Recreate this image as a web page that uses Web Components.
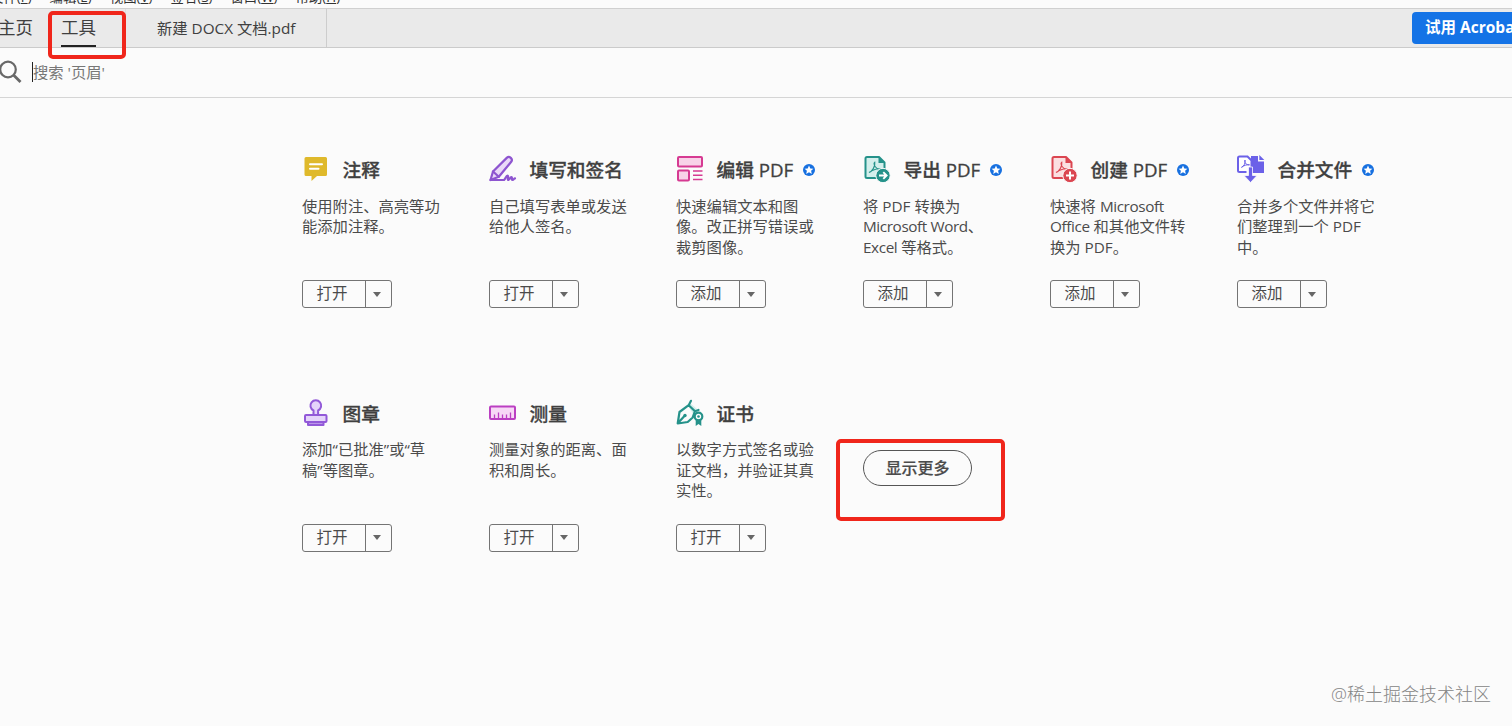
<!DOCTYPE html>
<html lang="zh-CN">
<head>
<meta charset="UTF-8">
<title>工具</title>
<style>
  body {
    margin: 0;
    height: 726px;
    overflow: hidden;
    background: #fbfbfb;
    color: #4b4b4b;
    font-family: "Open Sans", "Noto Sans CJK SC", sans-serif;
  }
</style>
</head>
<body>
<tools-app></tools-app>

<script>
  // 28x28 icon drawings, keyed by the name passed to <tool-icon>
  const ICONS = {
    comment: `<path d="M4 2h19.500q1.500 0 1.500 1.500v16q0 1.500-1.500 1.500H15l-5.500 5v-5H4q-1.500 0-1.500-1.500v-16Q2.500 2 4 2z" fill="#dfb92b"/>
      <path d="M8 9.300h12M8 13.800h8.500" stroke="#fff" stroke-width="2" stroke-linecap="round"/>`,
    sign: `<g fill="none" stroke="#8e55d0" stroke-width="2.200" stroke-linecap="round" stroke-linejoin="round">
      <path d="M1.500 25l2.500-8.500L18 2.600q1.700-1.500 3.800.3 2 1.900.4 3.900L9.800 21.800z" fill="#ead9f8"/>
      <path d="M4 16.500l5.800 5.300M1.500 25h13.500c1.500-1 2-4.500 3.500-4.500s-.5 4.500.8 4.500 1.700-3 3-3-.2 3 1.200 3 1.300-1.600 2.500-1.600"/></g>`,
    edit: `<g fill="#f8d2e8" stroke="#d63a92" stroke-width="2"><rect x="2" y="2" width="24" height="9.500" rx="1"/><rect x="2" y="15.500" width="11" height="10" rx="1"/></g>
      <path d="M17 16h9.500M17 20.300h9.500M17 24.600h9.500" stroke="#d63a92" stroke-width="1.500"/>`,
    export: `<path d="M4 2h12l5.500 5.500V23H4q-1.500 0-1.500-1.500v-18Q2.500 2 4 2z" fill="#d3efec" stroke="#25928a" stroke-width="2" stroke-linejoin="round"/>
      <path d="M15.500 2v6h6z" fill="#25928a"/>
      <path d="M6 17.500c3-1 6.500-6 5.800-10.200-2 1.500 1.300 8 6.200 6.700-3-.9-8 .8-12 3.500z" fill="none" stroke="#25928a" stroke-width="1.100"/>
      <circle cx="20" cy="20.500" r="7.200" fill="#25928a" stroke="#fbfbfb"/>
      <path d="M16 20.500h7.500m-3.200-3.300l3.300 3.300-3.300 3.300" fill="none" stroke="#fff" stroke-width="1.900"/>`,
    create: `<path d="M4 2h12l5.500 5.500V23H4q-1.500 0-1.500-1.500v-18Q2.500 2 4 2z" fill="#fbdfe1" stroke="#db4651" stroke-width="2" stroke-linejoin="round"/>
      <path d="M15.500 2v6h6z" fill="#db4651"/>
      <path d="M6 17.500c3-1 6.500-6 5.800-10.200-2 1.500 1.300 8 6.200 6.700-3-.9-8 .8-12 3.500z" fill="none" stroke="#db4651" stroke-width="1.100"/>
      <circle cx="20" cy="20.500" r="7.200" fill="#db4651" stroke="#fbfbfb"/>
      <path d="M16 20.500h8m-4-4v8" fill="none" stroke="#fff" stroke-width="2"/>`,
    combine: `<path d="M14 1h7v5.500h6V18h-13z" fill="#6b61e8"/><path d="M22.300 0v5h5z" fill="#6b61e8"/>
      <path d="M9.500 17H2.500q-1.500 0-1.500-1.500V3q0-1.500 1.500-1.500h8l4 4V12" fill="#fff" stroke="#6b61e8" stroke-width="2"/>
      <path d="M4.500 12.300c2.500-1 4-4 3.600-7.300-1.400 1.500 1 5.600 4.400 4.800-2-.5-5.500.5-8 2.500z" fill="none" stroke="#6b61e8"/>
      <path d="M11.500 12h4v8.500h4.500L13.500 27.500 7 20.500h4.500z" fill="#6b61e8" stroke="#fbfbfb" stroke-width=".8"/>`,
    stamp: `<g fill="#e5d4fa" stroke="#9259d8" stroke-width="2" stroke-linejoin="round"><path d="M11.500 16v-4.500a5.400 5.400 0 1 1 4.600 0V16z"/>
      <rect x="3" y="16" width="21.500" height="7" rx="1"/><path d="M6 23.500h15.500v2.500H6z"/></g>`,
    measure: `<rect x="1" y="7.500" width="25" height="12.500" rx="1" fill="#f7d8f6" stroke="#bb3fc2" stroke-width="2"/>
      <path d="M5.500 19.500v-4M9.500 19.500v-6M13.500 19.500v-4M17.500 19.500v-4M21.500 19.500v-6" stroke="#bb3fc2" stroke-width="1.300"/>`,
    certificate: `<path d="M14 4l7 6-4 5-4-7z" fill="#d3efec"/>
      <g fill="none" stroke="#25928a" stroke-width="2.200" stroke-linecap="round" stroke-linejoin="round">
      <path d="M15 1.800l-2.300 4.400 6.300 6 3.500-1.200M12.700 6.200L3.500 13 1.700 24.500l10-1.500 5-4.500L19 12.200M2 24l6-6.500"/>
      <circle cx="22.500" cy="17.500" r="3.800" fill="#fbfbfb"/></g><circle cx="9" cy="16.500" r="1.700" fill="#25928a"/><circle cx="22.500" cy="17.500" r="1.300" fill="#25928a"/>
      <path d="M19.700 20.500h5.600V27l-2.800-2-2.800 2z" fill="#25928a"/>`
  };

  class ToolIcon extends HTMLElement {
    connectedCallback() {
      this.attachShadow({ mode: 'open' }).innerHTML = `
        <style>
          :host { display: block; width: 28px; height: 28px; flex: none; margin-bottom: 2px; }
          svg { display: block; }
        </style>
        <svg width="28" height="28" viewBox="0 0 28 28">${ICONS[this.getAttribute('name')]}</svg>
      `;
    }
  }

  class SplitButton extends HTMLElement {
    constructor() {
      super();
      this.attachShadow({ mode: 'open' }).innerHTML = `
        <style>
          :host {
            display: flex;
            box-sizing: border-box;
            width: 90px;
            height: 28px;
            border: 1px solid #747474;
            border-radius: 3px;
            font-size: 15.5px;
            line-height: 25px;
          }
          .label { width: 63px; box-sizing: border-box; padding-right: 4px; text-align: center; border-right: 1px solid #747474; }
          .arrow { flex: 1; display: grid; place-items: center; padding-right: 4px; }
        </style>
        <div class="label"><slot></slot></div>
        <div class="arrow"><svg width="8" height="5"><path d="M0 0h8L4 5z" fill="#666"/></svg></div>
      `;
    }
  }

  class ToolCard extends HTMLElement {
    connectedCallback() {
      const star = `<svg class="star" width="12" height="12" viewBox="0 0 12 12"><circle cx="6" cy="6" r="6" fill="#1770e0"/>
        <path d="M6 1.500l1.300 2.900 3.100.3-2.300 2.100.7 3.100L6 8.300 3.200 9.900l.7-3.100-2.300-2.100 3.100-.3z" fill="#fff"/></svg>`;
      this.attachShadow({ mode: 'open' }).innerHTML = `
        <style>
          :host { display: block; }
          .head { display: flex; align-items: center; height: 30px; }
          .title {
            margin-left: 12.500px;
            font-size: 18.7px;
            line-height: 30px;
            font-weight: 500;
            color: #404040;
            white-space: nowrap;
            -webkit-text-stroke: 0.3px #404040;
          }
          .star { margin-left: 9.500px; }
          .desc { height: 84.500px; margin-top: 10.500px; font-size: 15.3px; line-height: 20.7px; white-space: nowrap; }
          ::slotted(.tight) { letter-spacing: -0.4px; }
        </style>
        <div class="head">
          <tool-icon name="${this.getAttribute('icon')}"></tool-icon>
          <div class="title"><slot name="title"></slot></div>
          ${this.hasAttribute('premium') ? star : ''}
        </div>
        <div class="desc"><slot></slot></div>
        <split-button>${this.getAttribute('action')}</split-button>
      `;
    }
  }

  class MenuBar extends HTMLElement {
    constructor() {
      super();
      this.attachShadow({ mode: 'open' }).innerHTML = `
        <style>
          :host { display: flex; align-items: flex-end; height: 8px; overflow: hidden; font-size: 13.4px; line-height: 18px; color: #333; }
          nav { display: flex; gap: 18px; margin-left: -10px; margin-bottom: 2px; white-space: nowrap; }
        </style>
        <nav>
          <span>文件(<u>F</u>)</span><span>编辑(<u>E</u>)</span><span>视图(<u>V</u>)</span>
          <span>签名(<u>S</u>)</span><span>窗口(<u>W</u>)</span><span>帮助(<u>H</u>)</span>
        </nav>
      `;
    }
  }

  class TabBar extends HTMLElement {
    constructor() {
      super();
      this.attachShadow({ mode: 'open' }).innerHTML = `
        <style>
          :host {
            display: flex;
            box-sizing: border-box;
            height: 40px;
            border-top: 1px solid #d0d0d0;
            border-bottom: 1px solid #cbcbcb;
            background: #eaeaea;
            line-height: 38px;
            white-space: nowrap;
            color: #404040;
          }
          .home, .tools { font-size: 17.500px; line-height: 37px; }
          .home { width: 61px; text-indent: -2px; }
          .tools { width: 35px; height: 36px; border-bottom: 2px solid #222; }
          .doc { width: 169px; margin-left: 29px; padding-left: 31px; border-left: 1px solid #dedede; border-right: 1px solid #cdcdcd; font-size: 15.3px; }
          .trial {
            margin: 3px 0 0 auto;
            width: 87px;
            height: 32px;
            padding-left: 13px;
            border-radius: 4px 0 0 4px;
            overflow: hidden;
            background: #1473e6;
            color: #fff;
            font-size: 15.5px;
            font-weight: 700;
            line-height: 31px;
          }
        </style>
        <div class="home">主页</div>
        <div class="tools">工具</div>
        <div class="doc">新建 DOCX 文档.pdf</div>
        <div class="trial">试用 Acrobat</div>
      `;
    }
  }

  class SearchBar extends HTMLElement {
    constructor() {
      super();
      this.attachShadow({ mode: 'open' }).innerHTML = `
        <style>
          :host { display: flex; align-items: center; box-sizing: border-box; height: 50px; padding-bottom: 2px; border-bottom: 1px solid #d5d5d5; font-size: 15.3px; color: #777; }
          .caret { width: 1px; height: 20px; margin-left: 10px; background: #222; }
          .hint { margin-bottom: 2px; }
        </style>
        <svg width="22" height="24" viewBox="0 0 22 24"><g fill="none" stroke="#686868" stroke-width="2.200"><circle cx="8" cy="9.500" r="7.800"/><path d="M13.500 15l7 7" stroke-width="2.800"/></g></svg>
        <span class="caret"></span>
        <span class="hint">搜索 '页眉'</span>
      `;
    }
  }

  class ToolsApp extends HTMLElement {
    constructor() {
      super();
      this.attachShadow({ mode: 'open' }).innerHTML = `
        <style>
          :host { display: block; position: relative; height: 726px; overflow: hidden; }
          main { display: grid; grid-template-columns: repeat(6, 187px); grid-auto-rows: 243.5px; padding: 57px 0 0 302px; }
          .more {
            box-sizing: border-box;
            width: 109px;
            height: 36px;
            margin-top: 51.500px;
            border: 1.500px solid #555;
            border-radius: 18px;
            text-align: center;
            font-size: 16px;
            font-weight: 500;
            line-height: 34px;
            -webkit-text-stroke: 0.2px;
          }
          .mark { position: absolute; box-sizing: border-box; border: 4px solid #f0261b; border-radius: 5px; }
          .mark.tab { left: 48px; top: 11px; width: 78px; height: 48px; }
          .mark.show { left: 836px; top: 439px; width: 169px; height: 82px; }
          .watermark { position: absolute; right: 21px; bottom: 18px; font-size: 18px; line-height: 27px; color: #858585; font-weight: 300; }
        </style>
        <menu-bar></menu-bar>
        <tab-bar></tab-bar>
        <search-bar></search-bar>
        <main>
          <tool-card icon="comment" action="打开"><span slot="title">注释</span>使用附注、高亮等功<br>能添加注释。</tool-card>
          <tool-card icon="sign" action="打开"><span slot="title">填写和签名</span>自己填写表单或发送<br>给他人签名。</tool-card>
          <tool-card icon="edit" action="添加" premium><span slot="title">编辑 PDF</span>快速编辑文本和图<br>像。改正拼写错误或<br>裁剪图像。</tool-card>
          <tool-card icon="export" action="添加" premium><span slot="title">导出 PDF</span>将 PDF 转换为<br><span class="tight">Microsoft Word</span>、<br><span class="tight">Excel</span> 等格式。</tool-card>
          <tool-card icon="create" action="添加" premium><span slot="title">创建 PDF</span>快速将 <span class="tight">Microsoft</span><br><span class="tight">Office</span> 和其他文件转<br>换为 PDF。</tool-card>
          <tool-card icon="combine" action="添加" premium><span slot="title">合并文件</span>合并多个文件并将它<br>们整理到一个 PDF<br>中。</tool-card>
          <tool-card icon="stamp" action="打开"><span slot="title">图章</span>添加“已批准”或“草<br>稿”等图章。</tool-card>
          <tool-card icon="measure" action="打开"><span slot="title">测量</span>测量对象的距离、面<br>积和周长。</tool-card>
          <tool-card icon="certificate" action="打开"><span slot="title">证书</span>以数字方式签名或验<br>证文档，并验证其真<br>实性。</tool-card>
          <div class="more">显示更多</div>
        </main>
        <div class="mark tab"></div>
        <div class="mark show"></div>
        <div class="watermark">@稀土掘金技术社区</div>
      `;
    }
  }

  customElements.define('tool-icon', ToolIcon);
  customElements.define('split-button', SplitButton);
  customElements.define('tool-card', ToolCard);
  customElements.define('menu-bar', MenuBar);
  customElements.define('tab-bar', TabBar);
  customElements.define('search-bar', SearchBar);
  customElements.define('tools-app', ToolsApp);
</script>
</body>
</html>
